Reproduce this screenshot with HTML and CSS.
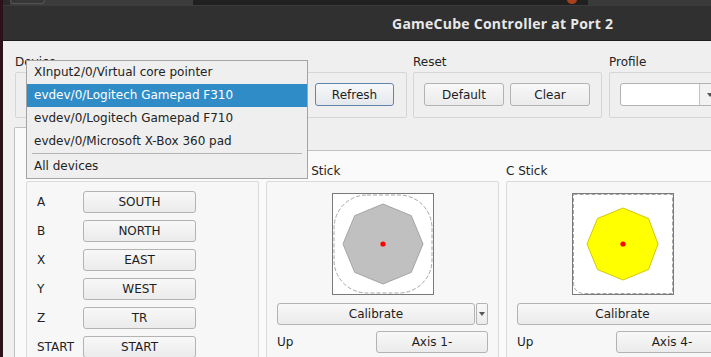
FILE: index.html
```html
<!DOCTYPE html>
<html>
<head>
<meta charset="utf-8">
<link rel="stylesheet" href="styles.css">
</head>
<body>
<div class="topstrip">
  <div class="ts-a"></div>
  <div class="ts-b"><div class="ts-btn"></div></div>
  <div class="ts-c"></div>
  <div class="ts-d"><span class="ts-dot"></span></div>
  <div class="ts-e"></div>
</div>
<div class="window">
  <div class="titlebar"><span class="title">GameCube Controller at Port 2</span></div>
  <div class="content">
    <div class="toprow">
      <div class="group g-device">
        <div class="gtitle">Device</div>
        <div class="gframe row-frame">
          <div class="combo dev-combo"></div>
          <button class="btn btn-focus w-refresh">Refresh</button>
        </div>
      </div>
      <div class="group g-reset">
        <div class="gtitle">Reset</div>
        <div class="gframe row-frame">
          <button class="btn w-reset">Default</button>
          <button class="btn w-reset">Clear</button>
        </div>
      </div>
      <div class="group g-profile">
        <div class="gtitle">Profile</div>
        <div class="gframe row-frame">
          <div class="combo edit-combo"><span class="edit-field"></span><span class="edit-arrow"><span class="tri"></span></span></div>
        </div>
      </div>
    </div>
    <div class="tabs">
      <div class="tabbar"><div class="tab active"></div><div class="tab"></div></div>
      <div class="pane">
        <div class="cols">
          <div class="group g-col">
            <div class="gtitle"></div>
            <div class="gframe col-frame btn-list">
              <div class="brow"><span class="blabel">A</span><button class="btn w-map">SOUTH</button></div>
              <div class="brow"><span class="blabel">B</span><button class="btn w-map">NORTH</button></div>
              <div class="brow"><span class="blabel">X</span><button class="btn w-map">EAST</button></div>
              <div class="brow"><span class="blabel">Y</span><button class="btn w-map">WEST</button></div>
              <div class="brow"><span class="blabel">Z</span><button class="btn w-map">TR</button></div>
              <div class="brow"><span class="blabel">START</span><button class="btn w-map">START</button></div>
            </div>
          </div>
          <div class="group g-col">
            <div class="gtitle tight">Control Stick</div>
            <div class="gframe col-frame stick-frame">
              <svg class="stick" width="102" height="102" viewBox="0 0 102 102">
                <rect x="0.5" y="0.5" width="101" height="101" fill="#ffffff" stroke="#7a7a7a"/>
                <rect x="2" y="2" width="98" height="98" rx="33" ry="33" fill="none" stroke="#a6a6a6" stroke-dasharray="4 2"/>
                <polygon points="51,11 79.3,22.7 91,51 79.3,79.3 51,91 22.7,79.3 11,51 22.7,22.7" fill="#c0c0c0" stroke="#a4a4a4"/>
                <circle cx="51" cy="51" r="2.6" fill="#ff0000"/>
              </svg>
              <div class="calrow">
                <button class="btn w-cal">Calibrate</button>
                <button class="btn drop-btn"><span class="tri"></span></button>
              </div>
              <div class="arow"><span class="alabel">Up</span><button class="btn w-axis">Axis 1-</button></div>
            </div>
          </div>
          <div class="group g-col">
            <div class="gtitle">C Stick</div>
            <div class="gframe col-frame stick-frame">
              <svg class="stick" width="102" height="102" viewBox="0 0 102 102">
                <rect x="0.5" y="0.5" width="101" height="101" fill="#ffffff" stroke="#7a7a7a"/>
                <path d="M1.5,1.5 H100.5 V100.5 H13 Q1.5,100.5 1.5,89 Z" fill="none" stroke="#a6a6a6" stroke-dasharray="4 2"/>
                <polygon points="51,15 76.5,25.5 86,51 76.5,76.5 51,87 25.5,76.5 15,51 25.5,25.5" fill="#ffff00" stroke="#d2c80a"/>
                <circle cx="51" cy="51" r="2.6" fill="#ff0000"/>
              </svg>
              <div class="calrow">
                <button class="btn w-calfull">Calibrate</button>
              </div>
              <div class="arow"><span class="alabel">Up</span><button class="btn w-axis">Axis 4-</button></div>
            </div>
          </div>
        </div>
      </div>
    </div>
  </div>
</div>
<div class="popup">
  <div class="pitem">XInput2/0/Virtual core pointer</div>
  <div class="pitem sel">evdev/0/Logitech Gamepad F310</div>
  <div class="pitem">evdev/0/Logitech Gamepad F710</div>
  <div class="pitem">evdev/0/Microsoft X-Box 360 pad</div>
  <div class="psep"></div>
  <div class="pitem">All devices</div>
</div>
</body>
</html>
```
FILE: styles.css
```css
* { box-sizing: border-box; }
html, body { margin: 0; padding: 0; }
body {
  width: 711px;
  height: 357px;
  overflow: hidden;
  background: #2c1118;
  font-family: "DejaVu Sans", sans-serif;
  font-size: 12px;
  color: #232323;
  position: relative;
}
.topstrip {
  margin-left: 3px;
  height: 5px;
  display: flex;
  background: #1f1f1f;
}
.ts-a { width: 7px; background: #2a2a2a; }
.ts-b { width: 183px; background: #3c3c3c; }
.ts-btn { width: 35px; height: 4px; border: 1px solid #555; border-top: none; border-radius: 0 0 4px 4px; background: #363636; }
.ts-c { width: 372px; background: #202020; }
.ts-d { width: 23px; background: #202020; position: relative; }
.ts-dot { position: absolute; left: 2px; top: -5px; width: 10px; height: 9px; border-radius: 50%; background: #a8401c; }
.ts-e { flex: 1; background: #3a3a3a; }

.window {
  margin-left: 3px;
  background: #efefef;
  height: 352px;
  overflow: hidden;
}
.titlebar {
  height: 36px;
  background: #303030;
  border-top: 1px solid #3b3b3b;
  border-bottom: 1px solid #1c1c1c;
  display: flex;
  align-items: center;
  padding-left: 389px;
}
.title {
  font-family: "Open Sans", sans-serif;
  font-weight: 700;
  font-size: 14px;
  color: #e8e8e8;
  letter-spacing: 0.25px;
  white-space: nowrap;
}
.content {
  padding: 13px 0 0 12px;
}
.toprow {
  display: flex;
  gap: 7px;
}
.group { display: flex; flex-direction: column; flex-shrink: 0; }
.gtitle {
  height: 16px;
  line-height: 16px;
  margin-bottom: 2px;
  white-space: nowrap;
}
.gtitle.tight { margin-left: -2px; }
.gframe {
  border: 1px solid #d6d6d6;
  border-radius: 2px;
}
.row-frame {
  height: 46px;
  display: flex;
  align-items: flex-start;
  padding-top: 10px;
}
.g-device { width: 392px; }
.g-device .row-frame { padding-left: 10px; gap: 7px; }
.g-reset { width: 189px; margin-left: -1px; }
.g-reset .row-frame { padding-left: 10px; gap: 6px; }
.g-profile { width: 120px; }
.g-profile .row-frame { padding-left: 10px; }

.btn {
  font-family: "DejaVu Sans", sans-serif;
  font-size: 12px;
  color: #1e1e1e;
  height: 23px;
  padding: 0;
  border: 1px solid #b3b3b3;
  border-radius: 3px;
  background: linear-gradient(#f8f8f8, #ebebeb);
  display: flex;
  align-items: center;
  justify-content: center;
  flex-shrink: 0;
}
.btn-focus {
  border-color: #5f84ad;
  background: linear-gradient(#f7f8fa, #e4e8ec);
}
.w-refresh { width: 79px; }
.w-reset { width: 80px; }
.combo { height: 23px; flex-shrink: 0; }
.dev-combo { width: 282px; }
.edit-combo {
  width: 100px;
  display: flex;
  border: 1px solid #b3b3b3;
  border-radius: 3px;
  background: #ffffff;
}
.edit-field { width: 79px; border-right: 1px solid #c4c4c4; }
.edit-arrow { flex: 1; display: flex; align-items: center; justify-content: center; background: #f2f2f2; }
.tri {
  width: 0; height: 0;
  border-left: 3.5px solid transparent;
  border-right: 3.5px solid transparent;
  border-top: 4px solid #555;
}

.tabs { margin-top: 8px; margin-left: -1px; }
.tabbar { height: 24px; display: flex; align-items: flex-end; }
.tab {
  height: 23px;
  width: 110px;
  border: 1px solid #c0c0c0;
  border-bottom: none;
  border-radius: 2px 2px 0 0;
  background: #e6e6e6;
  margin-right: -1px;
}
.tab.active { background: #fafafa; height: 24px; position: relative; z-index: 1; margin-bottom: -1px; }
.pane {
  border: 1px solid #c0c0c0;
  border-right: none;
  background: #fafafa;
  height: 220px;
  padding: 12px 0 0 11px;
}
.cols { display: flex; gap: 7px; }
.g-col { width: 233px; }
.col-frame {
  height: 200px;
  border-color: #dadada;
  background: #f7f7f7;
}
.btn-list {
  padding: 9px 0 0 10px;
  display: flex;
  flex-direction: column;
  gap: 7px;
}
.brow { display: flex; align-items: center; height: 22px; }
.blabel { width: 46px; }
.w-map { width: 113px; height: 22px; }

.stick-frame {
  padding: 11px 10px 0 10px;
  display: flex;
  flex-direction: column;
  align-items: center;
}
.stick { display: block; flex-shrink: 0; }
.calrow { display: flex; gap: 1px; margin-top: 8px; align-self: stretch; }
.w-cal { width: 198px; height: 22px; }
.drop-btn { width: 12px; height: 22px; border-radius: 2px; }
.w-calfull { width: 211px; height: 22px; }
.arow { display: flex; align-items: center; margin-top: 6px; align-self: stretch; }
.alabel { width: 99px; flex-shrink: 0; }
.w-axis { width: 112px; height: 22px; }

.popup {
  position: absolute;
  left: 26px;
  top: 60px;
  width: 282px;
  height: 119px;
  border: 1px solid #a4a4a4;
  background: #efefef;
  z-index: 5;
}
.pitem {
  height: 23px;
  line-height: 23px;
  padding-left: 7px;
  white-space: nowrap;
}
.pitem.sel { background: #308cc6; color: #ffffff; }
.psep {
  height: 2px;
  margin: 0 5px;
  border-top: 1px solid #b4b4b4;
}
```
